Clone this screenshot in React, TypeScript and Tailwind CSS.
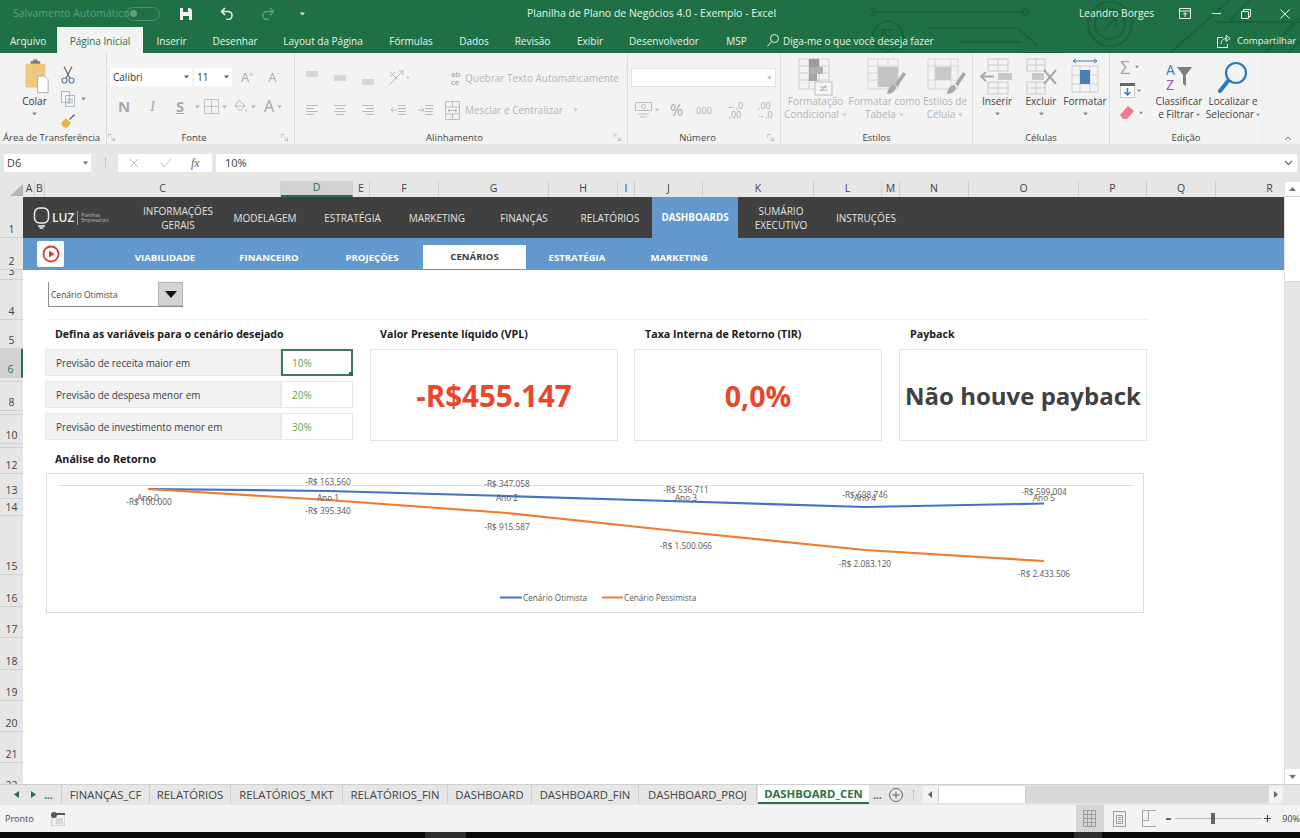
import React from "react";

const Caret = ({ c = "#8a8a8a", w = 5 }: { c?: string; w?: number }) => (
  <svg width={w} height={4} viewBox="0 0 5 4" className="inline-block shrink-0"><path d="M0 0.5h5L2.5 3.5z" fill={c} /></svg>
);

const Launcher = () => (
  <svg width="7" height="7" viewBox="0 0 7 7" className="shrink-0"><path d="M0.5 0.5h3M0.5 0.5v3M6.5 6.5L3 3M6.5 3.5v3h-3" stroke="#b5b5b5" strokeWidth="0.8" fill="none" /></svg>
);

const Lines = ({ kind }: { kind: "l" | "c" | "r" | "t" | "m" | "b" }) => {
  const g = "#b9b9b9";
  if (kind === "t" || kind === "m" || kind === "b") {
    const y = kind === "t" ? 1 : kind === "m" ? 5 : 9;
    return <svg width="14" height="14" viewBox="0 0 14 14"><path d={`M1 ${y}h12M1 ${y + 2}h12M1 ${y + 4}h12`} stroke={g} /></svg>;
  }
  const p = kind === "l" ? "M1 1.5h12M1 4.5h8M1 7.5h12M1 10.5h8" : kind === "c" ? "M1 1.5h12M3 4.5h8M1 7.5h12M3 10.5h8" : "M1 1.5h12M5 4.5h8M1 7.5h12M5 10.5h8";
  return <svg width="14" height="13" viewBox="0 0 14 13"><path d={p} stroke={g} /></svg>;
};

const StyleIcon = ({ kind }: { kind: 0 | 1 | 2 }) => (
  <svg width="50" height="38" viewBox="0 0 50 38">
    {kind === 0 && (
      <g>
        <path d="M8 1h30v30H8zM8 8h30M8 15h30M8 22h30M18 1v30M28 1v30" stroke="#cfcfcf" fill="none" />
        <rect x="18" y="1" width="10" height="8" fill="#9c9c9c" />
        <rect x="18" y="9" width="14" height="7" fill="#b0b0b0" />
        <rect x="18" y="16" width="8" height="7" fill="#a5a5a5" />
        <rect x="24" y="24" width="17" height="13" fill="#f6f6f6" stroke="#bdbdbd" />
        <path d="M30 33l5-6M29 29h7M29 32h7" stroke="#999" strokeWidth="0.8" />
      </g>
    )}
    {kind === 1 && (
      <g>
        <path d="M8 1h30v30H8zM8 8h30M8 15h30M8 22h30M18 1v30M28 1v30" stroke="#d5d5d5" fill="none" />
        <rect x="18" y="9" width="20" height="20" fill="#c4c4c4" />
        <path d="M27 36c1-6 4-9 7-9l2 2c0 4-4 7-9 7zM35 26L43 14l3 2-8 12z" fill="#a8a8a8" />
      </g>
    )}
    {kind === 2 && (
      <g>
        <path d="M8 1h30v30H8z" stroke="#d5d5d5" fill="none" />
        <path d="M8 8h30M8 22h30M15 1v30M31 1v30" stroke="#d5d5d5" />
        <rect x="15" y="9" width="16" height="13" fill="#c9c9c9" />
        <path d="M27 36c1-6 4-9 7-9l2 2c0 4-4 7-9 7zM35 26L43 14l3 2-8 12z" fill="#a8a8a8" />
      </g>
    )}
  </svg>
);

const rowHeads: [string, string][] = [
  ["1", "h-[41px]"], ["2", "h-[32px]"], ["3", "h-[10px]"], ["4", "h-[40px]"], ["5", "h-[29px]"], ["6", "h-[29px]"], ["", "h-[3px]"],
  ["8", "h-[29px]"], ["", "h-[3px]"], ["10", "h-[29px]"], ["", "h-[3px]"], ["12", "h-[26px]"], ["13", "h-[25px]"], ["14", "h-[17px]"],
  ["15", "h-[59px]"], ["16", "h-[32px]"], ["17", "h-[31px]"], ["18", "h-[32px]"], ["19", "h-[31px]"], ["20", "h-[31px]"], ["21", "h-[31px]"], ["22", "h-[31px]"],
];

const cols: [string, string][] = [
  ["A", "w-[11px]"], ["B", "w-[10px]"], ["C", "w-[236px]"], ["D", "w-[72px]"], ["E", "w-[17px]"], ["F", "w-[69px]"], ["G", "w-[110px]"], ["H", "w-[69px]"], ["I", "w-[17px]"],
  ["J", "w-[68px]"], ["K", "w-[111px]"], ["L", "w-[68px]"], ["M", "w-[18px]"], ["N", "w-[69px]"], ["O", "w-[110px]"], ["P", "w-[68px]"], ["Q", "w-[69px]"], ["R", "w-[108px]"],
];

const topNav: [string[], string][] = [
  [["INFORMAÇÕES", "GERAIS"], "w-[82px]"], [["MODELAGEM"], "w-[92px]"], [["ESTRATÉGIA"], "w-[83px]"], [["MARKETING"], "w-[86px]"], [["FINANÇAS"], "w-[88px]"], [["RELATÓRIOS"], "w-[84px]"],
];

const subNav: [string, string][] = [["VIABILIDADE", "w-[104px]"], ["FINANCEIRO", "w-[104px]"], ["PROJEÇÕES", "w-[102px]"]];

const ribbonTabs: [string, string][] = [
  ["Inserir", "ml-[14px] w-[29px]"], ["Desenhar", "ml-[27px] w-[44px]"], ["Layout da Página", "ml-[27px] w-[78px]"], ["Fórmulas", "ml-[28px] w-[42px]"], ["Dados", "ml-[27px] w-[30px]"], ["Revisão", "ml-[26px] w-[35px]"], ["Exibir", "ml-[28px] w-[24px]"], ["Desenvolvedor", "ml-[27px] w-[70px]"], ["MSP", "ml-[27px] w-[21px]"],
];

const vars: [string, string][] = [["Previsão de despesa menor em", "20%"], ["Previsão de investimento menor em", "30%"]];

const sheetTabs: [string, string][] = [
  ["FINANÇAS_CF", "w-[88px]"], ["RELATÓRIOS", "w-[81px]"], ["RELATÓRIOS_MKT", "w-[112px]"], ["RELATÓRIOS_FIN", "w-[105px]"], ["DASHBOARD", "w-[84px]"], ["DASHBOARD_FIN", "w-[107px]"], ["DASHBOARD_PROJ", "w-[118px]"],
];

const Card = ({ title, value, cls, mlTitle }: { title: string; value: string; cls: string; mlTitle: string }) => (
  <div className="flex flex-col">
    <div className={`h-[29px] flex items-center font-bold text-[10.7px] text-[#1a1a1a] ${mlTitle}`}>{title}</div>
    <div className={`w-[248px] h-[92px] pt-[2px] border border-[#e4e4e4] flex items-center justify-center font-bold ${cls}`}>{value}</div>
  </div>
);

const labels: [string, number, number][] = [
  ["-R$ 100.000", 102, 31], ["Ano 0", 101, 27], ["-R$ 163.560", 281, 11], ["Ano 1", 281, 27], ["-R$ 395.340", 281, 40],
  ["-R$ 347.058", 460, 13], ["Ano 2", 460, 27], ["-R$ 915.587", 460, 56], ["-R$ 536.711", 639, 19], ["Ano 3", 639, 27], ["-R$ 1.500.066", 639, 75],
  ["-R$ 698.746", 818, 24], ["Ano 4", 818, 27], ["-R$ 2.083.120", 818, 93], ["-R$ 599.004", 997, 21], ["Ano 5", 997, 27], ["-R$ 2.433.506", 997, 103],
];

const Chart = () => (
  <svg width="1096" height="138" viewBox="0 0 1096 138" className="block">
    <path d="M11 11.5H1087" stroke="#dcdcdc" />
    <polyline points="101,15 281,17 460,22 639,27.5 818,33 997,29.5" fill="none" stroke="#4472c4" strokeWidth="2.2" strokeLinejoin="round" />
    <polyline points="101,15 281,26 460,39 639,58 818,76 997,87" fill="none" stroke="#ed7d31" strokeWidth="2.2" strokeLinejoin="round" />
    {labels.map(([t, x, y], i) => (
      <text key={i} x={x} y={y} textAnchor="middle" fontSize="8.3" fill="#595959" fontFamily="'Open Sans',sans-serif">{t}</text>
    ))}
    <path d="M453 123.5h22" stroke="#4472c4" strokeWidth="2" />
    <text x="476" y="127" fontSize="8.2" fill="#595959" fontFamily="'Open Sans',sans-serif">Cenário Otimista</text>
    <path d="M555 123.5h21" stroke="#ed7d31" strokeWidth="2" />
    <text x="577" y="127" fontSize="8.2" fill="#595959" fontFamily="'Open Sans',sans-serif">Cenário Pessimista</text>
  </svg>
);

export default function App() {
  return (
    <div className="w-[1300px] h-[838px] overflow-hidden flex flex-col font-['Open_Sans',sans-serif] bg-black">
      {/* Green header */}
      <div className="relative h-[53px] bg-[#1f7145] shrink-0 text-[#e9f2ec]">
        <svg width="430" height="53" viewBox="0 0 430 53" className="absolute right-0 top-0" fill="none" stroke="#1a6239" strokeWidth="2">
          <path d="M2 12H155" /><circle cx="2" cy="12" r="3" /><circle cx="155" cy="12" r="3" />
          <circle cx="18" cy="36" r="15" /><path d="M12 42V30h12M12 30l12 12" />
          <path d="M58 28h90l20 18M90 42h60M150 53h45" />
          <circle cx="240" cy="24" r="22" /><circle cx="240" cy="24" r="15" /><path d="M234 30l12-12M236 18h10v10" />
          <path d="M300 53L360 0M345 22h85M395 53l35-35M418 53l12-12M380 0l-20 20" />
        </svg>
        <div className="relative h-[27px] flex items-center text-[10.5px]">
          <span className="ml-[13px] w-[110px] shrink-0 text-[#5f9f7c] whitespace-nowrap">Salvamento Automático</span>
          <span className="ml-[3px] w-[34px] h-[14px] shrink-0 rounded-full border border-[#4a8f6a] flex items-center pl-[3px]"><span className="w-[7px] h-[7px] rounded-full bg-[#5f9f7c]" /></span>
          <svg width="12" height="12" viewBox="0 0 12 12" className="ml-[20px] shrink-0"><path d="M0 0h10l2 2v10H0z" fill="#f2f2f2" /><path d="M3 0h5v4H3zM3 8h6v4H3z" fill="#1f7145" /></svg>
          <svg width="14" height="13" viewBox="0 0 14 13" className="ml-[28px] shrink-0" fill="none" stroke="#f2f2f2" strokeWidth="1.6"><path d="M5 1L1.5 4.5 5 8M2 4.5h6a4 4 0 0 1 0 8H6" /></svg>
          <svg width="14" height="13" viewBox="0 0 14 13" className="ml-[27px] shrink-0" fill="none" stroke="#5f9f7c" strokeWidth="1.4"><path d="M9 1l3.5 3.5L9 8M12 4.5H6a4 4 0 0 0 0 8h2" /></svg>
          <span className="ml-[25px] flex shrink-0"><Caret c="#d5e6dc" /></span>
          <span className="ml-[222px] w-[244px] shrink-0 text-center whitespace-nowrap">Planilha de Plano de Negócios 4.0 - Exemplo  -  Excel</span>
          <span className="ml-[308px] w-[74px] shrink-0 text-[10.2px] whitespace-nowrap">Leandro Borges</span>
          <svg width="12" height="11" viewBox="0 0 12 11" className="ml-[26px] shrink-0" fill="none" stroke="#eef5f0"><path d="M.5.5h11v10H.5zM.5 3h11M6 9V5M4 6.5L6 4.5l2 2" /></svg>
          <span className="ml-[21px] w-[9px] h-px bg-[#eef5f0] shrink-0" />
          <svg width="10" height="10" viewBox="0 0 10 10" className="ml-[20px] shrink-0" fill="none" stroke="#eef5f0"><path d="M.5 2.5h7v7h-7zM2.5 2.5v-2h7v7h-2" /></svg>
          <svg width="10" height="10" viewBox="0 0 10 10" className="ml-[29px] shrink-0" fill="none" stroke="#eef5f0"><path d="M.5.5l9 9M9.5.5l-9 9" /></svg>
        </div>
        <div className="relative h-[26px] flex items-end text-[10px]">
          <span className="ml-[10px] w-[47px] h-[26px] shrink-0 pt-[2px] flex items-center">Arquivo</span>
          <span className="w-[86px] h-[26px] shrink-0 pt-[2px] bg-[#f3f3f3] text-[#1f7145] flex items-center justify-center">Página Inicial</span>
          {ribbonTabs.map(([t, m]) => <span key={t} className={`h-[26px] shrink-0 pt-[2px] flex items-center justify-center whitespace-nowrap ${m}`}>{t}</span>)}
          <svg width="12" height="13" viewBox="0 0 12 13" className="ml-[20px] mb-[6px] shrink-0" fill="none" stroke="#e9f2ec"><circle cx="7.5" cy="4.5" r="4" /><path d="M4.5 7.5L.5 12.5" /></svg>
          <span className="ml-[4px] h-[26px] w-[153px] shrink-0 pt-[2px] flex items-center whitespace-nowrap">Diga-me o que você deseja fazer</span>
          <svg width="15" height="13" viewBox="0 0 15 13" className="ml-[281px] mb-[5px] shrink-0" fill="none" stroke="#e9f2ec"><path d="M6 2.5H.5v10h10V9M4 9c0-4 3-5.500 6-5.500M9 .5l4 3-4 3z" /></svg>
          <span className="ml-[5px] h-[26px] shrink-0 pt-[2px] flex items-center whitespace-nowrap text-[9.6px]">Compartilhar</span>
        </div>
      </div>

      {/* Ribbon */}
      <div className="h-[92px] bg-[#f3f3f3] flex shrink-0 text-[10px] text-[#444444] leading-[13px] border-b border-[#e3e3e3]">
        {/* Clipboard */}
        <div className="w-[107px] flex flex-col border-r border-[#dcdcdc]">
          <div className="flex-1 flex pl-[17px] pt-[6px]">
            <div className="w-[35px] flex flex-col items-center">
              <svg width="28" height="35" viewBox="0 0 32 39">
                <rect x="5" y="5" width="23" height="27" rx="1" fill="#f0c77e" />
                <path d="M11 5V2h3V0h5v2h3v3z" fill="#7a7a7a" />
                <path d="M19 19h8l4 4v15H19z" fill="#fff" stroke="#a6a6a6" />
              </svg>
              <span className="mt-[1px] text-[#333]">Colar</span>
              <span className="mt-[4px] flex"><Caret /></span>
            </div>
            <div className="ml-[9px] flex flex-col pt-[7px]">
              <svg width="14" height="18" viewBox="0 0 14 18" fill="none" stroke="#5a7fa8" strokeWidth="1.2"><circle cx="3.500" cy="14.500" r="2.500" /><circle cx="10.500" cy="14.500" r="2.500" /><path d="M5 12.500L11 .5M9 12.500L3 .5" stroke="#666" /></svg>
              <div className="flex items-center gap-[6px] mt-[7px]">
                <svg width="14" height="16" viewBox="0 0 14 16" fill="#f8f8f8" stroke="#a9b5bf"><path d="M.5.5h8v11h-8zM4.500 4.500h9v11h-9zM6 8h6M6 10h6M6 12h6" /></svg>
                <Caret />
              </div>
              <svg width="14" height="14" viewBox="0 0 14 14" className="mt-[7px]"><path d="M0 9l5-5 5 5-4 5c-3 0-5-2-6-5z" fill="#e9b54a" /><path d="M8 5l5-5 1 1-5 5z" fill="#666" /></svg>
            </div>
          </div>
          <div className="h-[13px] flex items-center pl-[3px] gap-[8px] whitespace-nowrap text-[9.5px]">Área de Transferência<Launcher /></div>
        </div>

        {/* Font */}
        <div className="w-[188px] flex flex-col border-r border-[#dcdcdc]">
          <div className="flex-1 pl-[3px] pt-[15px] flex flex-col">
            <div className="flex items-center">
              <span className="w-[82px] h-[18px] bg-white flex items-center justify-between px-[3px] text-[#333]">Calibri<Caret c="#555" /></span>
              <span className="ml-[2px] w-[38px] h-[18px] bg-white flex items-center justify-between px-[3px] text-[#333]">11<Caret c="#555" /></span>
              <span className="ml-[9px] text-[13px] text-[#a8a8a8]">A<sup className="text-[7px]">^</sup></span>
              <span className="ml-[15px] text-[13px] text-[#a8a8a8]">A<sup className="text-[7px]">ˇ</sup></span>
            </div>
            <div className="flex items-center mt-[13px] text-[#a9a9a9] text-[15px] font-bold">
              <span className="ml-[8px] w-[32px]">N</span>
              <span className="w-[26px] italic font-normal font-['Liberation_Serif',serif]">I</span>
              <span className="w-[19px] underline">S</span><Caret c="#bbb" />
              <svg width="15" height="15" viewBox="0 0 15 15" className="ml-[4px]" fill="none" stroke="#c4c4c4"><path d="M.5.5h14v14H.5zM7.500.5v14M.5 7.500h14" /></svg>
              <span className="ml-[3px] flex"><Caret c="#bbb" /></span>
              <svg width="15" height="15" viewBox="0 0 15 15" className="ml-[6px]" fill="none" stroke="#bdbdbd"><path d="M6 1l6 6-5 5-5-5zM2 7h10M13 10v3" /></svg>
              <span className="ml-[3px] flex"><Caret c="#bbb" /></span>
              <span className="ml-[8px] text-[16px] font-normal text-[#a5a5a5]">A</span>
              <span className="ml-[3px] flex"><Caret c="#bbb" /></span>
            </div>
          </div>
          <div className="h-[13px] flex items-center text-[9.5px] pr-[6px]"><span className="flex-1 text-center">Fonte</span><Launcher /></div>
        </div>

        {/* Alignment */}
        <div className="w-[333px] flex flex-col border-r border-[#dcdcdc]">
          <div className="flex-1 pl-[10px] pt-[15px] flex flex-col text-[#b3b3b3]">
            <div className="flex items-center h-[20px]">
              <Lines kind="t" /><span className="ml-[14px]"><Lines kind="m" /></span><span className="ml-[14px]"><Lines kind="b" /></span>
              <svg width="18" height="18" viewBox="0 0 18 18" className="ml-[12px]" fill="none" stroke="#b9b9b9"><path d="M2 16L16 2M12 2h4v4M3 3l7 7M3 8l5-5" /></svg>
              <span className="ml-[1px] flex"><Caret c="#ccc" w={4} /></span>
              <span className="ml-[41px] text-[8px] leading-[8px] text-[#999] w-[12px]">ab<br />ce</span>
              <span className="ml-[2px] whitespace-nowrap">Quebrar Texto Automaticamente</span>
            </div>
            <div className="flex items-center h-[20px] mt-[12px]">
              <Lines kind="l" /><span className="ml-[14px]"><Lines kind="c" /></span><span className="ml-[14px]"><Lines kind="r" /></span>
              <svg width="16" height="13" viewBox="0 0 16 13" className="ml-[15px]" fill="none" stroke="#b9b9b9"><path d="M8 1.500h8M8 4.500h8M8 7.500h8M8 10.500h8M7 6H1M3.500 3.500L1 6l2.500 2.500" /></svg>
              <svg width="16" height="13" viewBox="0 0 16 13" className="ml-[11px]" fill="none" stroke="#b9b9b9"><path d="M8 1.500h8M8 4.500h8M8 7.500h8M8 10.500h8M1 6h6M4.500 3.500L7 6 4.500 8.500" /></svg>
              <svg width="15" height="19" viewBox="0 0 15 19" className="ml-[12px]" fill="none" stroke="#bcbcbc"><path d="M.5.500h14v18H.5zM.5 6h14M.5 13h14M7.500.5v5M7.500 13v5M3 9.500h9M3 9.500l2-1.500M3 9.500l2 1.500M12 9.500l-2-1.500M12 9.500l-2 1.500" /></svg>
              <span className="ml-[5px] whitespace-nowrap">Mesclar e Centralizar</span>
              <span className="ml-[10px] flex"><Caret c="#ccc" /></span>
            </div>
          </div>
          <div className="h-[13px] flex items-center text-[9.5px] pr-[6px]"><span className="flex-1 text-center">Alinhamento</span><Launcher /></div>
        </div>

        {/* Number */}
        <div className="w-[153px] flex flex-col border-r border-[#dcdcdc]">
          <div className="flex-1 pl-[3px] pt-[15px] flex flex-col">
            <span className="w-[145px] h-[19px] bg-white border border-[#e2e2e2] flex items-center justify-end pr-[3px]"><Caret c="#bbb" /></span>
            <div className="flex items-center mt-[14px] text-[#adadad]">
              <svg width="17" height="16" viewBox="0 0 17 16" className="ml-[4px]" fill="none" stroke="#bdbdbd"><path d="M.5.500h16v8H.5zM3 12h11M5 15h7" /><circle cx="8.500" cy="4.500" r="2" /></svg>
              <span className="ml-[3px] flex"><Caret c="#bbb" w={4} /></span>
              <span className="ml-[11px] text-[16px] font-normal">%</span>
              <span className="ml-[13px] text-[9px]">000</span>
              <span className="ml-[15px] text-[9px] leading-[9px] text-center">←,0<br />,00</span>
              <span className="ml-[13px] text-[9px] leading-[9px] text-center">,00<br />→,0</span>
            </div>
          </div>
          <div className="h-[13px] flex items-center text-[9.5px] pr-[6px]"><span className="flex-1 text-center">Número</span><Launcher /></div>
        </div>

        {/* Styles */}
        <div className="w-[192px] flex flex-col border-r border-[#dcdcdc]">
          <div className="flex-1 flex pt-[5px] text-[#b3b3b3] text-center whitespace-nowrap">
            <div className="w-[69px] flex flex-col items-center"><StyleIcon kind={0} /><span className="-mt-[1px]">Formatação</span><span className="flex items-center gap-[3px]">Condicional <Caret c="#ccc" /></span></div>
            <div className="w-[69px] flex flex-col items-center"><StyleIcon kind={1} /><span className="-mt-[1px]">Formatar como</span><span className="flex items-center gap-[3px]">Tabela <Caret c="#ccc" /></span></div>
            <div className="w-[52px] flex flex-col items-center"><StyleIcon kind={2} /><span className="-mt-[1px]">Estilos de</span><span className="flex items-center gap-[3px]">Célula <Caret c="#ccc" /></span></div>
          </div>
          <div className="h-[13px] flex items-center justify-center text-[9.5px]">Estilos</div>
        </div>

        {/* Cells */}
        <div className="w-[137px] flex flex-col border-r border-[#dcdcdc]">
          <div className="flex-1 flex pt-[5px] pl-[2px] text-center">
            <div className="w-[44px] flex flex-col items-center">
              <svg width="34" height="38" viewBox="0 0 34 38" fill="none" stroke="#c9c9c9"><path d="M8 1h20v12H8zM8 7h20M18 1v12M8 24h20v12H8zM8 30h20M18 24v12" /><path d="M18 15h14v7H18z" fill="#c8c8c8" stroke="none" /><path d="M14 18.500H2M6 14l-5 4.500L6 23" stroke="#aaa" strokeWidth="2" /></svg>
              <span className="-mt-[1px]">Inserir</span><span className="mt-[4px] flex"><Caret /></span>
            </div>
            <div className="w-[44px] flex flex-col items-center">
              <svg width="34" height="38" viewBox="0 0 34 38" fill="none" stroke="#c9c9c9"><path d="M3 1h18v12H3zM3 7h18M12 1v12M3 24h18v12H3zM3 30h18M12 24v12" /><path d="M8 15h12v7H8z" fill="#c8c8c8" stroke="none" /><path d="M20 12l12 14M32 12L20 26" stroke="#a8a8a8" strokeWidth="2" /></svg>
              <span className="-mt-[1px]">Excluir</span><span className="mt-[4px] flex"><Caret /></span>
            </div>
            <div className="w-[44px] flex flex-col items-center">
              <svg width="30" height="38" viewBox="0 0 30 38" fill="none" stroke="#d0d0d0"><path d="M2 8h26v26H2zM10 8v26M20 8v26M2 17h26M2 26h26" /><rect x="10" y="12" width="10" height="14" fill="#4a7fb5" stroke="none" /><path d="M3 3h24M3 3l3-2M3 3l3 2M27 3l-3-2M27 3l-3 2" stroke="#4a7fb5" /></svg>
              <span className="-mt-[1px]">Formatar</span><span className="mt-[4px] flex"><Caret /></span>
            </div>
          </div>
          <div className="h-[13px] flex items-center justify-center text-[9.5px]">Células</div>
        </div>

        {/* Editing */}
        <div className="w-[153px] flex flex-col border-r border-[#ececec]">
          <div className="flex-1 flex pt-[4px]">
            <div className="w-[42px] pl-[10px] flex flex-col">
              <div className="flex items-center gap-[5px] h-[20px] text-[18px] text-[#a5a5a5]">Σ<Caret w={4} /></div>
              <div className="flex items-center gap-[2px] mt-[6px]">
                <svg width="15" height="15" viewBox="0 0 15 15"><rect width="14" height="14" x=".5" y=".5" fill="#fff" stroke="#c9c9c9" /><rect width="15" height="3" fill="#666" /><path d="M7.500 5v7M4.500 9l3 3 3-3" fill="none" stroke="#3a7cc2" strokeWidth="1.500" /></svg>
                <Caret w={4} />
              </div>
              <div className="flex items-center gap-[5px] mt-[8px]">
                <svg width="14" height="13" viewBox="0 0 14 13"><path d="M0 9l8-9 6 5-7 8H3z" fill="#ef7a8d" /></svg>
                <Caret w={4} />
              </div>
            </div>
            <div className="w-[54px] flex flex-col items-center">
              <svg width="30" height="35" viewBox="0 0 30 35" className="mt-[2px]"><text x="2" y="16" fontSize="14" fill="#3a7cc2" fontFamily="'Open Sans',sans-serif">A</text><text x="2" y="31" fontSize="14" fill="#8a5bb5" fontFamily="'Open Sans',sans-serif">Z</text><path d="M13 8h15l-6 8v11l-3-2v-9z" fill="#7f7f7f" /></svg>
              <span className="mt-[1px]">Classificar</span>
              <span className="flex items-center gap-[2px] whitespace-nowrap">e Filtrar <Caret w={4} /></span>
            </div>
            <div className="w-[54px] flex flex-col items-center">
              <svg width="30" height="33" viewBox="0 0 30 33" className="mt-[4px]" fill="none" stroke="#2f77bd"><circle cx="18" cy="12" r="10" strokeWidth="2.200" /><path d="M10 20L2 30" strokeWidth="4" strokeLinecap="round" /></svg>
              <span className="whitespace-nowrap mt-[1px]">Localizar e</span>
              <span className="flex items-center gap-[2px] whitespace-nowrap">Selecionar <Caret w={4} /></span>
            </div>
          </div>
          <div className="h-[13px] flex items-center justify-center text-[9.5px]">Edição</div>
        </div>
        <div className="flex-1 flex items-end justify-end pr-[8px] pb-[3px]">
          <svg width="8" height="6" viewBox="0 0 8 6" fill="none" stroke="#777"><path d="M1 5l3-3 3 3" /></svg>
        </div>
      </div>

      {/* Formula bar */}
      <div className="h-[36px] bg-[#e6e6e6] shrink-0 flex items-center text-[11px] text-[#444444]">
        <div className="ml-[4px] w-[87px] h-[18px] bg-white flex items-center justify-between px-[3px]">D6<Caret c="#666" /></div>
        <span className="ml-[14px] w-[2px] h-[10px] border-l border-dotted border-[#aaa]" />
        <div className="ml-[11px] w-[94px] h-[18px] bg-white flex items-center text-[#bbb]">
          <svg width="10" height="10" viewBox="0 0 10 10" className="ml-[11px]" fill="none" stroke="#bdbdbd"><path d="M1 1l8 8M9 1l-8 8" /></svg>
          <svg width="12" height="10" viewBox="0 0 12 10" className="ml-[21px]" fill="none" stroke="#bdbdbd"><path d="M1 5l3 4 7-8" /></svg>
          <span className="ml-[19px] italic text-[#666] text-[12px] font-['Liberation_Serif',serif]">fx</span>
        </div>
        <div className="ml-[4px] flex-1 mr-[3px] h-[18px] bg-white flex items-center justify-between pl-[9px] pr-[4px]">10%
          <svg width="9" height="6" viewBox="0 0 9 6" fill="none" stroke="#777" strokeWidth="1.300"><path d="M1 1l3.500 3.500L8 1" /></svg>
        </div>
      </div>

      {/* Grid */}
      <div className="flex-1 flex min-h-0 bg-white">
        <div className="flex-1 flex flex-col min-w-0">
          {/* Col headers */}
          <div className="h-[16px] shrink-0 bg-[#e6e6e6] flex overflow-hidden text-[10.5px] text-[#444444]">
            <div className="w-[24px] shrink-0 flex items-end justify-end pr-[1px] pb-[1px]">
              <svg width="13" height="12" viewBox="0 0 13 12"><path d="M13 0v12H0z" fill="#b5b5b5" /></svg>
            </div>
            {cols.map(([c, w]) => (
              <div key={c} className={`${w} shrink-0 flex items-center justify-center border-r border-[#cfcfcf] ${c === "D" ? "bg-[#d2d2d2] text-[#217346] border-b-2 border-b-[#217346]" : ""}`}>{c}</div>
            ))}
          </div>
          <div className="flex-1 flex min-h-0">
            {/* Row headers */}
            <div className="w-[23px] shrink-0 h-[588px] overflow-hidden bg-[#e6e6e6] text-[10.5px] text-[#444444] leading-none">
              {rowHeads.map(([r, h], i) => (
                <div key={i} className={`${h} flex items-end justify-center pb-[3px] border-b border-[#cfcfcf] overflow-hidden ${r === "6" ? "bg-[#d2d2d2] border-r-2 border-r-[#217346] text-[#217346]" : ""}`}>{r}</div>
              ))}
            </div>
            {/* Sheet */}
            <div className="flex-1 min-w-0 h-[588px] overflow-hidden flex flex-col">
              <div className="h-[41px] shrink-0 bg-[#404040] flex text-[10px] text-[#e2e2e2] leading-[14px] text-center">
                <div className="w-[114px] flex items-center pl-[10px]">
                  <svg width="17" height="22" viewBox="0 0 17 22" fill="none" stroke="#efefef" strokeWidth="1.500"><rect x="1.500" y="1" width="14" height="15" rx="5" /><path d="M5 19h7M6.500 21h4" /></svg>
                  <span className="ml-[2px] text-[#efefef] text-[12px] font-semibold">LUZ</span>
                  <span className="ml-[3px] w-px h-[14px] bg-[#9a9a9a]" />
                  <span className="ml-[3px] text-[4.5px] leading-[5px] text-left text-[#bdbdbd]">Planilhas<br />Empresariais</span>
                </div>
                {topNav.map(([l, w], i) => (
                  <div key={i} className={`${w} flex flex-col items-center justify-center whitespace-nowrap`}>{l.map((x) => <span key={x}>{x}</span>)}</div>
                ))}
                <div className="w-[86px] bg-[#6398cc] flex items-center justify-center font-bold text-[9.8px] text-white">DASHBOARDS</div>
                <div className="w-[86px] flex flex-col items-center justify-center"><span>SUMÁRIO</span><span>EXECUTIVO</span></div>
                <div className="w-[84px] flex items-center justify-center">INSTRUÇÕES</div>
              </div>
              <div className="h-[32px] shrink-0 bg-[#6398cc] flex items-end text-[9.6px] font-bold text-white">
                <div className="w-[90px] h-full flex items-start pl-[14px] pt-[3px]">
                  <div className="w-[27px] h-[26px] bg-white rounded-[2px] flex items-center justify-center">
                    <svg width="18" height="18" viewBox="0 0 18 18" fill="none" stroke="#d93a32" strokeWidth="1.800"><circle cx="9" cy="9" r="7.500" /><path d="M7 5.500l5.500 3.500L7 12.500z" fill="#d93a32" stroke="none" /></svg>
                  </div>
                </div>
                {subNav.map(([t, w]) => <div key={t} className={`${w} h-[25px] pt-[2px] flex items-center justify-center`}>{t}</div>)}
                <div className="w-[103px] h-[24px] mb-[1px] pt-[1px] bg-white text-[#404040] flex items-center justify-center">CENÁRIOS</div>
                <div className="w-[102px] h-[25px] pt-[1px] flex items-center justify-center">ESTRATÉGIA</div>
                <div className="w-[102px] h-[25px] pt-[1px] flex items-center justify-center">MARKETING</div>
              </div>
              <div className="flex-1 pl-[22px] pt-[12px] flex flex-col">
                {/* Dropdown */}
                <div className="ml-[3px] w-[135px] h-[25px] flex border-l border-b border-[#8f8f8f]">
                  <span className="flex-1 flex items-center pl-[2px] pt-[2px] text-[8.5px] text-[#444] bg-white">Cenário Otimista</span>
                  <span className="w-[25px] bg-[#d4d4d4] border border-[#b5b5b5] flex items-center justify-center">
                    <svg width="12" height="7" viewBox="0 0 12 7"><path d="M0 0h12L6 7z" fill="#111" /></svg>
                  </span>
                </div>
                <div className="ml-[3px] w-[1100px] h-px bg-[#efefef] mt-[12px]" />
                {/* KPI */}
                <div className="flex">
                  <div className="w-[308px] flex flex-col">
                    <div className="h-[29px] flex items-center pl-[10px] font-bold text-[10.6px] text-[#1a1a1a]">Defina as variáveis para o cenário desejado</div>
                    <div className="h-[27px] flex text-[9.9px] text-[#404040]">
                      <div className="w-[236px] bg-[#f2f2f2] border border-[#e8e8e8] pt-[1px] flex items-center pl-[10px]">Previsão de receita maior em</div>
                      <div className="relative w-[72px] border-2 border-[#3f7a5a] pt-[1px] flex items-center pl-[9px] text-[#62a24a] text-[10px]">
                        10%
                        <span className="absolute -right-[2px] -bottom-[2px] w-[4px] h-[4px] bg-[#217346]" />
                      </div>
                    </div>
                    {vars.map(([l, v]) => (
                      <div key={l} className="h-[27px] mt-[5px] flex text-[9.9px] text-[#404040]">
                        <div className="w-[236px] bg-[#f2f2f2] border border-[#e8e8e8] pt-[1px] flex items-center pl-[10px]">{l}</div>
                        <div className="w-[72px] border border-[#e8e8e8] pt-[1px] flex items-center pl-[10px] text-[#62a24a] text-[10px]">{v}</div>
                      </div>
                    ))}
                  </div>
                  <div className="ml-[17px]"><Card title="Valor Presente líquido (VPL)" value="-R$455.147" cls="text-[#e8472d] text-[29.5px]" mlTitle="ml-[10px]" /></div>
                  <div className="ml-[16px]"><Card title="Taxa Interna de Retorno (TIR)" value="0,0%" cls="text-[#e8472d] text-[28.5px]" mlTitle="ml-[11px]" /></div>
                  <div className="ml-[17px]"><Card title="Payback" value="Não houve payback" cls="text-[#404040] text-[24px] whitespace-nowrap" mlTitle="ml-[11px]" /></div>
                </div>
                <div className="h-[32px] flex items-end pb-[6px] pl-[10px] font-bold text-[10.7px] text-[#1a1a1a]">Análise do Retorno</div>
                <div className="ml-[1px] w-[1098px] h-[140px] border border-[#dedede]"><Chart /></div>
              </div>
            </div>
          </div>
        </div>
        {/* Vertical scrollbar */}
        <div className="w-[16px] shrink-0 flex flex-col bg-[#e6e6e6] border-l border-[#e0e0e0]">
          <div className="h-[14px] bg-white flex items-center justify-center mt-px"><svg width="7" height="4" viewBox="0 0 7 4"><path d="M0 4h7L3.500 0z" fill="#777" /></svg></div>
          <div className="h-[86px] bg-white border-t border-b border-[#d9d9d9]" />
          <div className="flex-1 bg-[#e6e6e6]" />
          <div className="h-[15px] bg-white flex items-center justify-center"><svg width="7" height="4" viewBox="0 0 7 4"><path d="M0 0h7L3.500 4z" fill="#777" /></svg></div>
        </div>
      </div>

      {/* Sheet tabs */}
      <div className="h-[20px] shrink-0 bg-[#e6e6e6] border-t border-[#cfcfcf] flex items-center text-[11.3px] text-[#444444]">
        <div className="w-[62px] h-full flex items-center border-r border-[#cfcfcf]">
          <svg width="5" height="7" viewBox="0 0 5 7" className="ml-[14px]"><path d="M5 0v7L0 3.500z" fill="#217346" /></svg>
          <svg width="5" height="7" viewBox="0 0 5 7" className="ml-[12px]"><path d="M0 0v7l5-3.500z" fill="#217346" /></svg>
          <span className="ml-[8px] text-[#217346] font-bold text-[10px] leading-none">...</span>
        </div>
        {sheetTabs.map(([t, w]) => (
          <div key={t} className={`${w} h-full pt-[1px] flex items-center justify-center whitespace-nowrap border-r border-[#cfcfcf]`}>{t}</div>
        ))}
        <div className="w-[111px] ml-[1px] h-full pt-[2px] bg-white border-b-2 border-[#217346] flex items-center justify-center font-bold text-[#217346] whitespace-nowrap">DASHBOARD_CEN</div>
        <span className="ml-[4px] text-[#217346] font-bold text-[10px] leading-none">...</span>
        <svg width="14" height="14" viewBox="0 0 14 14" className="ml-[7px]" fill="none" stroke="#666"><circle cx="7" cy="7" r="6.500" /><path d="M7 3.500v7M3.500 7h7" /></svg>
        <span className="ml-[10px] w-[2px] h-[10px] border-l border-dotted border-[#aaa]" />
        <div className="ml-[8px] flex-1 h-[17px] mr-[17px] flex bg-[#d8d8d8]">
          <div className="w-[15px] bg-[#f3f3f3] flex items-center justify-center"><svg width="4" height="7" viewBox="0 0 4 7"><path d="M4 0v7L0 3.500z" fill="#666" /></svg></div>
          <div className="w-[88px] bg-white border-x border-[#d0d0d0]" />
          <div className="flex-1" />
          <div className="w-[14px] bg-[#f3f3f3] flex items-center justify-center"><svg width="4" height="7" viewBox="0 0 4 7"><path d="M0 0v7l4-3.500z" fill="#666" /></svg></div>
        </div>
      </div>

      {/* Status */}
      <div className="h-[28px] shrink-0 bg-[#f3f3f3] border-t border-[#e4e4e4] flex items-center text-[9px] text-[#444444]">
        <span className="ml-[5px]">Pronto</span>
        <svg width="14" height="14" viewBox="0 0 14 14" className="ml-[17px]"><rect x="1" y="2" width="13" height="12" fill="#f6f6f6" stroke="#9a9a9a" strokeWidth=".6" /><rect x="5" y="1" width="9" height="2" fill="#555" /><circle cx="3" cy="3" r="3" fill="#555" /><path d="M4 7h8M4 9h8M4 11h8M6 6v7M8.500 6v7M11 6v7" stroke="#bbb" strokeWidth=".6" /></svg>
        <div className="ml-[1011px] w-[28px] h-full bg-[#d6d6d6] flex items-center justify-center">
          <svg width="13" height="17" viewBox="0 0 13 17" fill="none" stroke="#9b9b9b"><path d="M.5.500h12v16H.5zM.5 4.500h12M.5 8.500h12M.5 12.500h12M4.500.5v16M8.500.5v16" /></svg>
        </div>
        <svg width="13" height="17" viewBox="0 0 13 17" className="ml-[9px]" fill="none" stroke="#9b9b9b"><path d="M.5 1.500h12v15H.5zM3.500 5.500h6v8h-6zM5 7.500h3M5 9.500h3M5 11.500h3" /></svg>
        <svg width="15" height="17" viewBox="0 0 15 17" className="ml-[16px]" fill="none" stroke="#a5a5a5"><path d="M.5.500h14v16H.5zM.5 10.500h6V.5" /></svg>
        <span className="ml-[10px] w-[5px] h-[2px] bg-[#666]" />
        <div className="ml-[4px] w-[87px] h-px bg-[#b5b5b5] flex items-center pl-[36px]"><span className="w-[4px] h-[11px] bg-[#666] shrink-0" /></div>
        <svg width="7" height="7" viewBox="0 0 7 7" className="ml-[2px]"><path d="M3.500 0v7M0 3.500h7" stroke="#444" strokeWidth="1.200" /></svg>
        <span className="ml-[11px] whitespace-nowrap">90%</span>
      </div>

      {/* Black bottom */}
      <div className="h-[6px] shrink-0 bg-[#0a0a0a] flex">
        <span className="ml-[425px] w-[41px] bg-[#2e2e2e]" />
        <span className="ml-[608px] w-[28px] bg-[#2e2e2e]" />
      </div>
    </div>
  );
}
